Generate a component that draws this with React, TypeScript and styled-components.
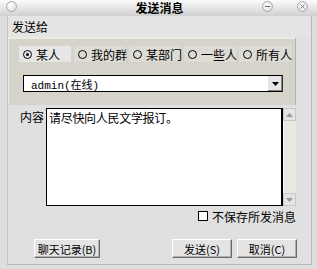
import styled, {createGlobalStyle} from 'styled-components'

const GlobalStyle = createGlobalStyle`
  html, body {
    margin: 0;
    padding: 0;
    background: #d8d8d8;
  }
  body {
    font-family: "Noto Sans CJK SC", "DejaVu Sans", sans-serif;
    font-size: 12px;
    color: #000;
  }
`

const recipients = ['某人', '我的群', '某部门', '一些人', '所有人']

export default function App() {
  return (
    <>
      <GlobalStyle />
      <Window>
        <TitleBar>
          <TitleCircle $left={6} />
          <Title>发送消息</Title>
          <TitleCircle $left={262}>
            <svg width="11" height="11" viewBox="0 0 11 11">
              <line x1="3" y1="5.5" x2="8" y2="5.5" stroke="#666" strokeWidth="1" />
            </svg>
          </TitleCircle>
          <TitleCircle $left={297}>
            <svg width="11" height="11" viewBox="0 0 11 11">
              <path d="M3.5 3.5 L7.5 7.5 M7.5 3.5 L3.5 7.5" stroke="#777" strokeWidth="1" />
            </svg>
          </TitleCircle>
        </TitleBar>
        <Body>
          <SectionLabel>发送给</SectionLabel>
          <Panel>
            <RadioRow>
              {recipients.map((r, i) => (
                <RadioItem key={r} $selected={i === 0}>
                  <Radio $checked={i === 0} />
                  {r}
                </RadioItem>
              ))}
            </RadioRow>
            <Select>
              <SelectText>admin(在线)</SelectText>
              <DropButton>
                <svg width="7" height="4" viewBox="0 0 7 4">
                  <path d="M0 0 H7 L3.5 4 Z" fill="#000" />
                </svg>
              </DropButton>
            </Select>
          </Panel>
          <ContentRow>
            <ContentLabel>内容</ContentLabel>
            <TextArea>请尽快向人民文学报订。</TextArea>
            <ScrollBar>
              <ScrollButton>
                <svg width="7" height="4" viewBox="0 0 7 4">
                  <path d="M0 4 H7 L3.5 0 Z" fill="#9a9a9a" />
                </svg>
              </ScrollButton>
              <ScrollTrack />
              <ScrollButton>
                <svg width="7" height="4" viewBox="0 0 7 4">
                  <path d="M0 0 H7 L3.5 4 Z" fill="#9a9a9a" />
                </svg>
              </ScrollButton>
            </ScrollBar>
          </ContentRow>
          <CheckRow>
            <CheckBox />
            不保存所发消息
          </CheckRow>
          <ButtonRow>
            <Button $width={66}>聊天记录(B)</Button>
            <Spacer />
            <Button $width={60}>发送(S)</Button>
            <Button $width={60}>取消(C)</Button>
          </ButtonRow>
        </Body>
      </Window>
    </>
  )
}

const Window = styled.div`
  width: 317px;
  height: 269px;
  display: flex;
  flex-direction: column;
  background: #dedede;
  overflow: hidden;
`

const TitleBar = styled.div`
  position: relative;
  height: 16px;
  flex: none;
  background: linear-gradient(#fbfbfb, #d0d0d0);
  display: flex;
  justify-content: center;
  align-items: center;
`

const Title = styled.div`
  font-size: 12px;
  font-weight: bold;
  line-height: 16px;
  padding-left: 2px;
`

const TitleCircle = styled.div<{$left: number}>`
  position: absolute;
  top: 1px;
  left: ${p => p.$left}px;
  width: 11px;
  height: 11px;
  border-radius: 50%;
  border: 1px solid #a8a8a8;
  background: radial-gradient(circle at 40% 35%, #ffffff, #d8d8d8);
  box-sizing: border-box;
  display: flex;
  align-items: center;
  justify-content: center;
  svg {
    flex: none;
  }
`

const Body = styled.div`
  flex: 1;
  display: flex;
  flex-direction: column;
  margin: 0 5px 4px 7px;
  border-left: 1px solid #c4c4c4;
  border-right: 1px solid #b8b8b8;
  border-bottom: 1px solid #b8b8b8;
  background: #e0e0e0;
`

const SectionLabel = styled.div`
  height: 21px;
  line-height: 22px;
  padding-left: 4px;
  background: #e4e4e4;
`

const Panel = styled.div`
  margin: 0 15px 0 0;
  height: 68px;
  box-sizing: border-box;
  background: #d6d3ca;
  border-top: 2px solid #eceae2;
  border-left: 1px solid #eceae2;
  border-right: 1px solid #b4b1a8;
  padding: 7px 0 0 10px;
`

const RadioRow = styled.div`
  display: flex;
  gap: 3px;
  height: 16px;
`

const RadioItem = styled.div<{$selected: boolean}>`
  flex: none;
  width: 52px;
  box-sizing: border-box;
  display: flex;
  align-items: center;
  gap: 4px;
  height: 16px;
  padding-left: 4px;
  background: ${p => (p.$selected ? '#e6e6e6' : '#dddbd5')};
  white-space: nowrap;
`

const Radio = styled.span<{$checked: boolean}>`
  flex: none;
  width: 9px;
  height: 9px;
  box-sizing: border-box;
  border: 1.5px solid #000;
  border-radius: 50%;
  display: flex;
  align-items: center;
  justify-content: center;
  &::after {
    content: '';
    width: 3px;
    height: 3px;
    border-radius: 50%;
    background: ${p => (p.$checked ? '#000' : 'transparent')};
  }
`

const Select = styled.div`
  margin: 13px 0 0 4px;
  width: 260px;
  height: 17px;
  box-sizing: border-box;
  background: #fff;
  border: 1px solid #000;
  border-right-color: #333;
  display: flex;
  align-items: center;
`

const SelectText = styled.span`
  flex: 1;
  padding-left: 7px;
  font-family: "Liberation Mono", "Noto Sans CJK SC", monospace;
  font-size: 11px;
`

const DropButton = styled.div`
  width: 14px;
  height: 15px;
  background: #e6e6e6;
  border-left: 1px solid #ffffff;
  box-shadow: inset -1px -1px 0 #808080;
  display: flex;
  align-items: center;
  justify-content: center;
`

const ContentRow = styled.div`
  display: flex;
  margin-top: 3px;
  height: 98px;
`

const ContentLabel = styled.div`
  width: 38px;
  padding-right: 2px;
  text-align: right;
  line-height: 16px;
  padding-top: 1px;
  box-sizing: border-box;
  flex: none;
`

const TextArea = styled.div`
  width: 237px;
  box-sizing: border-box;
  background: #fff;
  border: 1px solid #000;
  border-right-width: 2px;
  padding: 1px 0 0 2px;
  line-height: 16px;
  letter-spacing: -0.3px;
`

const ScrollBar = styled.div`
  width: 13px;
  display: flex;
  flex-direction: column;
  background: #e8e8e2;
`

const ScrollButton = styled.div`
  height: 13px;
  box-sizing: border-box;
  border: 1px solid #c8c8c8;
  background: #e4e4e0;
  display: flex;
  align-items: center;
  justify-content: center;
`

const ScrollTrack = styled.div`
  flex: 1;
  background: #e9e9e4;
  border-left: 1px solid #f4f4f0;
`

const CheckRow = styled.div`
  display: flex;
  align-items: center;
  gap: 4px;
  margin: 3px 0 0 190px;
  height: 14px;
`

const CheckBox = styled.span`
  width: 10px;
  height: 10px;
  box-sizing: border-box;
  border: 1.5px solid #000;
  background: #fff;
`

const ButtonRow = styled.div`
  display: flex;
  gap: 5px;
  margin: 16px 0 0 26px;
  padding-right: 14px;
`

const Spacer = styled.div`
  flex: 1;
`

const Button = styled.div<{$width: number}>`
  width: ${p => p.$width}px;
  height: 19px;
  box-sizing: border-box;
  border: 1px solid;
  border-color: #ffffff #6a6a6a #6a6a6a #ffffff;
  box-shadow: inset -1px -1px 0 #b0b0b0;
  background: #e4e4e4;
  display: flex;
  align-items: center;
  justify-content: center;
  font-size: 11px;
  white-space: nowrap;
`
